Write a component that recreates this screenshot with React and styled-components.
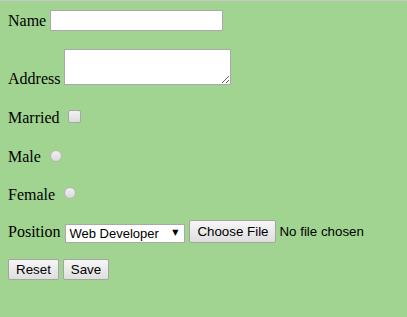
import React from "react"
import styled, { createGlobalStyle } from "styled-components"

const GlobalStyle = createGlobalStyle`
    html, body {
        margin: 0;
        padding: 0;
        background-color: #a1d490;
    }
    body {
        font-family: "Liberation Serif", "Times New Roman", serif;
        font-size: 16px;
        color: #000;
    }
`

const App = () => (
    <>
        <GlobalStyle />
        <Page>
            <Row $top={0} $align="center">
                <Label>Name</Label>
                <TextInput type="text" />
            </Row>
            <Row $top={18}>
                <Label $offset={21}>Address</Label>
                <TextArea />
            </Row>
            <Row $top={20}>
                <Label $offset={1}>Married</Label>
                <Check type="checkbox" $offset={2} />
            </Row>
            <Row $top={21}>
                <Label>Male</Label>
                <Radio type="radio" name="gender" $offset={2} />
            </Row>
            <Row $top={20}>
                <Label>Female</Label>
                <Radio type="radio" name="gender" $offset={1} />
            </Row>
            <Row $top={17}>
                <Label $offset={2}>Position</Label>
                <SelectWrap>
                    <Select defaultValue="web">
                        <option value="web">Web Developer</option>
                        <option value="design">Designer</option>
                        <option value="qa">Tester</option>
                    </Select>
                    <Arrow>▼</Arrow>
                </SelectWrap>
                <FileButton type="button">Choose File</FileButton>
                <FileText>No file chosen</FileText>
            </Row>
            <Row $top={16}>
                <Button type="reset" $width={51}>Reset</Button>
                <Button type="submit" $width={46}>Save</Button>
            </Row>
        </Page>
    </>
)

const Page = styled.form`
    border-top: 1px solid #c8c8c8;
    padding: 9px 8px 20px;
    min-height: 317px;
    box-sizing: border-box;
`

const Row = styled.div`
    display: flex;
    align-items: ${p => p.$align || "flex-start"};
    gap: 4px;
    margin-top: ${p => p.$top}px;
`

const Label = styled.span`
    line-height: 18px;
    margin-top: ${p => p.$offset || 0}px;
    white-space: nowrap;
`

const TextInput = styled.input`
    box-sizing: border-box;
    width: 173px;
    height: 21px;
    margin: 0;
    border: 1px solid #a9a9a9;
    background: #fff;
    font-family: "Liberation Sans", Arial, sans-serif;
    font-size: 13px;
    padding: 1px 3px;
    outline: none;
`

const TextArea = styled.textarea`
    box-sizing: border-box;
    width: 167px;
    height: 36px;
    margin: 0;
    border: 1px solid #a9a9a9;
    background: #fff;
    font-family: "Liberation Mono", monospace;
    font-size: 13px;
    padding: 2px;
    outline: none;
`

const Check = styled.input`
    appearance: none;
    box-sizing: border-box;
    width: 13px;
    height: 13px;
    margin: ${p => p.$offset}px 0 0 4px;
    border: 1px solid #a6a6a6;
    border-radius: 2px;
    background: linear-gradient(#f2f2f2, #dcdcdc);
`

const Radio = styled(Check)`
    border-radius: 50%;
    width: 12px;
    height: 12px;
    margin-left: 5px;
    border-color: #b4b4b4;
    background: linear-gradient(#f0f0f0, #dadada);
`

const SelectWrap = styled.div`
    position: relative;
    margin-top: 3px;
    margin-left: 1px;
`

const Select = styled.select`
    appearance: none;
    box-sizing: border-box;
    width: 120px;
    height: 19px;
    margin: 0;
    padding: 0 0 0 3px;
    border: 1px solid #a9a9a9;
    border-radius: 0;
    background: #fff;
    color: #000;
    font-family: "Liberation Sans", Arial, sans-serif;
    font-size: 13px;
    outline: none;
`

const Arrow = styled.span`
    position: absolute;
    right: 7px;
    top: 3px;
    font-family: "DejaVu Sans", sans-serif;
    font-size: 8px;
    line-height: 12px;
    pointer-events: none;
`

const buttonLook = `
    box-sizing: border-box;
    margin: 0;
    border: 1px solid #a4a4a4;
    border-radius: 2px;
    background: linear-gradient(#f6f6f6, #dedede);
    color: #000;
    font-family: "Liberation Sans", Arial, sans-serif;
    font-size: 13.33px;
    padding: 0;
`

const FileButton = styled.button`
    ${buttonLook}
    width: 87px;
    height: 23px;
    margin-top: -1px;
`

const FileText = styled.span`
    font-family: "Liberation Sans", Arial, sans-serif;
    font-size: 13.33px;
    line-height: 21px;
    margin-left: -1px;
`

const Button = styled.button`
    ${buttonLook}
    width: ${p => p.$width}px;
    height: 21px;
`

export default App
